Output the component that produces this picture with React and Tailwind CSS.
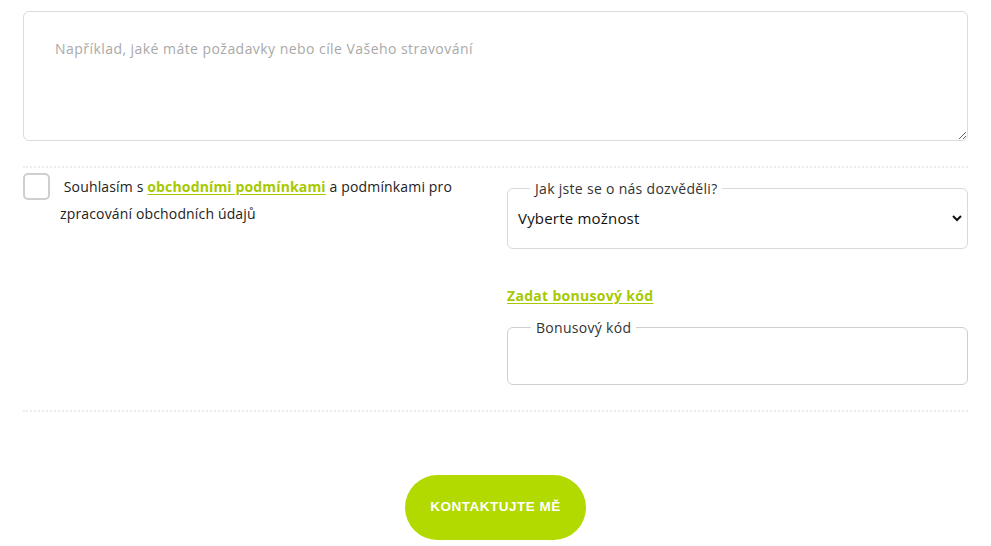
import React from "react";

function App() {
  return (
    <div className="min-h-screen bg-white" style={{ fontFamily: "'Open Sans', sans-serif" }}>
      <form className="px-[23px] pt-[11px]">
        {/* Message */}
        <textarea
          placeholder="Například, jaké máte požadavky nebo cíle Vašeho stravování"
          className="block w-full h-[130px] border border-[#dcdcdc] rounded-md px-[31px] pt-[26px] text-[14px] tracking-[0.45px] text-[#333] placeholder:text-[#a9a9a9] outline-none"
        />

        <div className="mt-[25px] border-t-2 border-dotted border-[#ececec]" />

        <div className="grid grid-cols-[1fr_461px] gap-[30px] pt-[5px]">
          {/* Consent */}
          <label className="flex items-start gap-[10px]">
            <span className="shrink-0 w-[27px] h-[27px] border-2 border-[#cfcfcf] rounded-[5px]" />
            <span className="text-[14px] tracking-[0.15px] leading-[27px] text-[#222] pr-[10px]">
              &nbsp;Souhlasím s{" "}
              <a href="#" className="font-bold text-[#a6c900] underline underline-offset-2">
                obchodními podmínkami
              </a>{" "}
              a podmínkami pro zpracování obchodních údajů
            </span>
          </label>

          {/* Right column */}
          <div className="pt-[5px]">
            <fieldset className="border border-[#d9d9d9] rounded-md pl-[6px] pr-[2px] pb-[18px] pt-[7px]">
              <legend className="ml-[16px] px-[5px] text-[14px] tracking-[0.3px] text-[#333]">
                Jak jste se o nás dozvěděli?
              </legend>
              <select className="w-full bg-transparent text-[15px] tracking-[0.2px] font-medium text-[#111] outline-none">
                <option>Vyberte možnost</option>
              </select>
            </fieldset>

            <a href="#" className="inline-block mt-[36px] font-bold text-[14px] tracking-[0.3px] text-[#a6c900] underline underline-offset-2">
              Zadat bonusový kód
            </a>

            <fieldset className="mt-[10px] border border-[#cfcfcf] rounded-md px-[10px] pb-[10px]">
              <legend className="ml-[13px] px-[5px] text-[14px] tracking-[0.3px] text-[#333]">
                Bonusový kód
              </legend>
              <input type="text" className="w-full h-[36px] bg-transparent outline-none text-[14px]" />
            </fieldset>
          </div>
        </div>

        <div className="mt-[25px] border-t-2 border-dotted border-[#ececec]" />

        <div className="flex justify-center pt-[63px]">
          <button
            type="button"
            className="w-[181px] h-[65px] rounded-full bg-[#b2d900] text-white font-bold text-[13.5px] tracking-[0.5px]"
            style={{ fontFamily: "'Liberation Sans', Arial, sans-serif" }}
          >
            KONTAKTUJTE MĚ
          </button>
        </div>
      </form>
    </div>
  );
}

export default App;
